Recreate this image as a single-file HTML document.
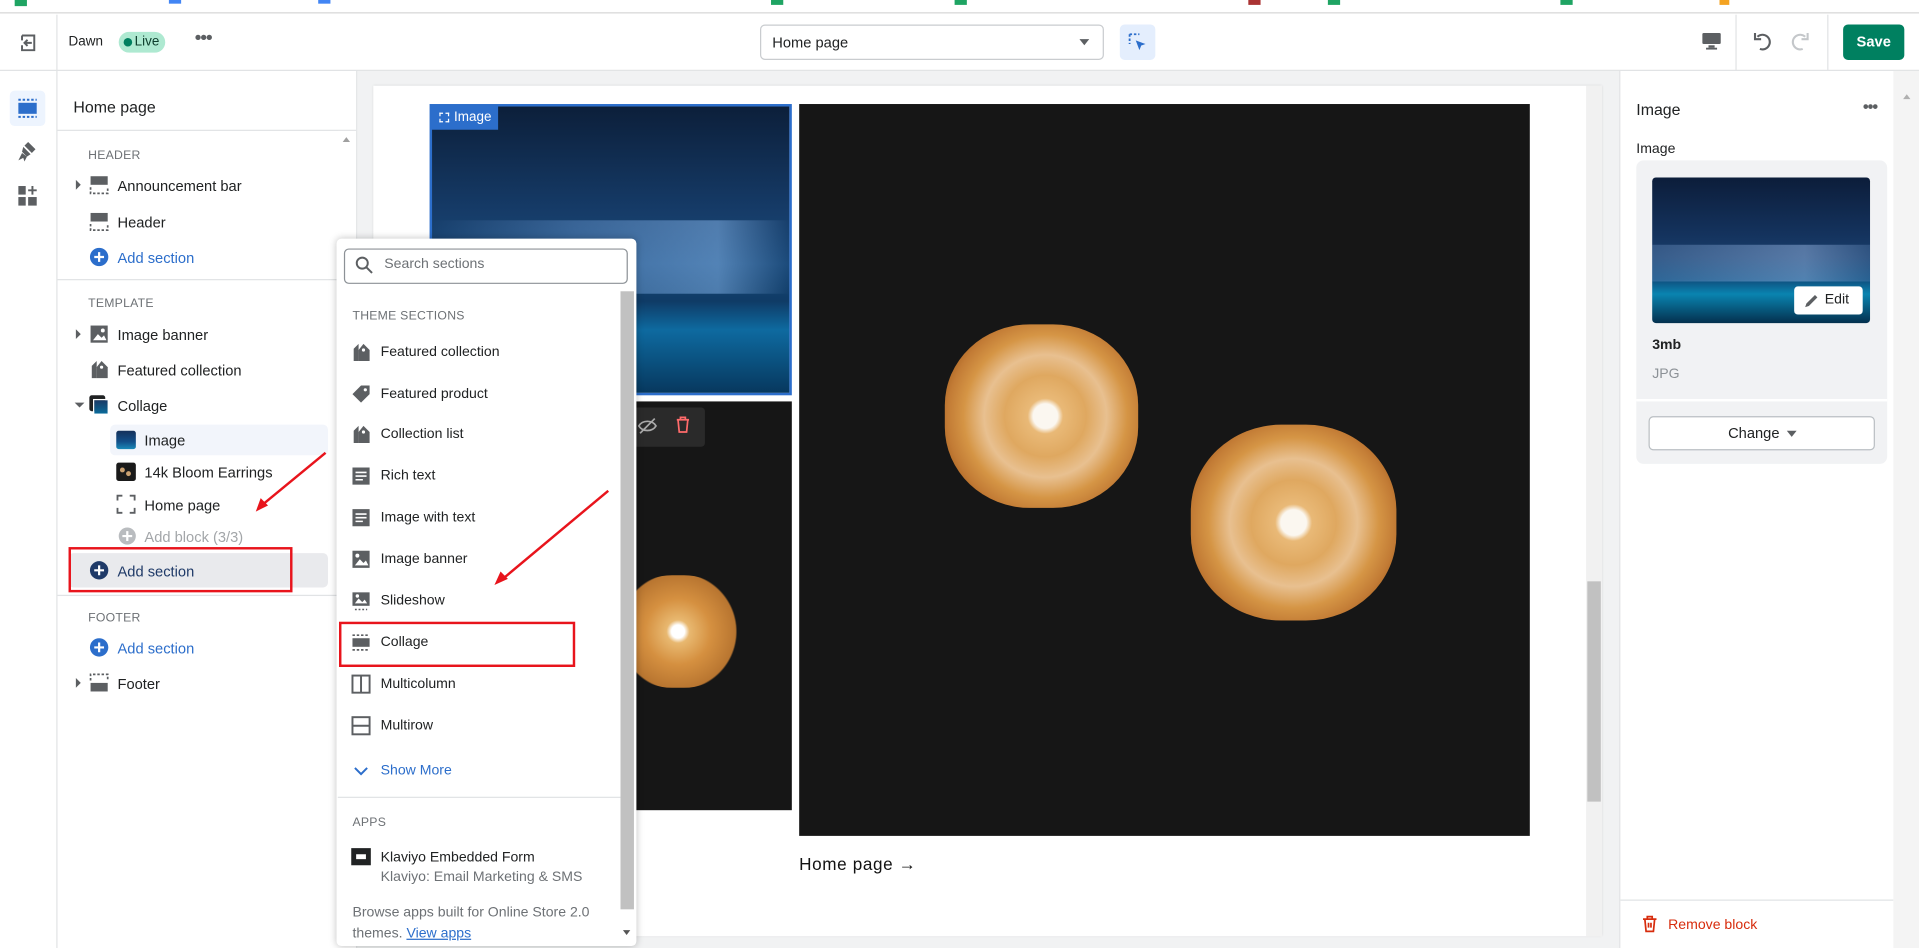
<!DOCTYPE html>
<html><head><meta charset="utf-8"><style>
*{box-sizing:border-box;margin:0;padding:0}
html,body{width:1919px;height:948px;overflow:hidden;background:#fff;font-family:"Liberation Sans",Arial,sans-serif;color:#202223}
#w{position:absolute;left:0;top:0;width:1568px;height:775px;transform:scale(1.22385);transform-origin:0 0;font-size:12px}
.a{position:absolute}
.t{position:absolute;white-space:nowrap}
.lbl{font-size:10px;color:#6d7175;letter-spacing:.2px}
.ic{position:absolute;width:16px;height:16px;background:#5c5f62;border-radius:2px}
.it{position:absolute;white-space:nowrap;font-size:12px;color:#202223}
.pic{position:absolute;width:16px;height:16px}
</style></head><body><div id="w">
<!-- bookmarks strip -->
<div class="a" style="left:0;top:0;width:1568px;height:11px;background:#fff;border-bottom:1px solid #d7d7d7"></div>
<div class="a" style="left:12px;top:0;width:10px;height:5px;background:#1fa463"></div>
<div class="a" style="left:138px;top:0;width:10px;height:3px;background:#4285f4"></div>
<div class="a" style="left:260px;top:0;width:10px;height:3px;background:#4285f4"></div>
<div class="a" style="left:630px;top:0;width:10px;height:4px;background:#1fa463"></div>
<div class="a" style="left:780px;top:0;width:10px;height:4px;background:#1fa463"></div>
<div class="a" style="left:1020px;top:0;width:10px;height:4px;background:#a33"></div>
<div class="a" style="left:1085px;top:0;width:10px;height:4px;background:#1fa463"></div>
<div class="a" style="left:1275px;top:0;width:10px;height:4px;background:#1fa463"></div>
<div class="a" style="left:1405px;top:0;width:8px;height:4px;background:#f4a322"></div>
<!-- toolbar -->
<div class="a" style="left:0;top:12px;width:1568px;height:46px;border-bottom:1px solid #e1e3e5;background:#fff"></div>
<div class="a" style="left:46px;top:12px;width:1px;height:763px;background:#e1e3e5"></div>
<svg class="a" style="left:15px;top:27px" width="16" height="16" viewBox="0 0 16 16"><path d="M3 2h10v12H3V10M3 6V2" fill="none" stroke="#5c5f62" stroke-width="1.6"/><path d="M11 8H5M7.5 5.5 5 8l2.5 2.5" fill="none" stroke="#5c5f62" stroke-width="1.6"/></svg>
<div class="t" style="left:56px;top:28px;font-size:11px">Dawn</div>
<div class="a" style="left:97px;top:26px;width:38px;height:17px;border-radius:9px;background:#aee9d1"></div>
<div class="a" style="left:101px;top:31px;width:7px;height:7px;border-radius:50%;background:#007f5f"></div>
<div class="t" style="left:110px;top:28px;font-size:11px;color:#0d3d2c">Live</div>
<div class="t" style="left:159px;top:23px;font-size:16px;color:#5c5f62;letter-spacing:-1px">•••</div>
<div class="a" style="left:621px;top:20px;width:281px;height:29px;border:1px solid #c9cccf;border-radius:4px"></div>
<div class="t" style="left:631px;top:28px;font-size:12px">Home page</div>
<div class="a" style="left:882px;top:32px;border-left:4px solid transparent;border-right:4px solid transparent;border-top:5px solid #5c5f62"></div>
<div class="a" style="left:915px;top:20px;width:29px;height:29px;background:#e4eefd;border-radius:4px"></div>
<svg class="a" style="left:921px;top:26px" width="17" height="17" viewBox="0 0 17 17"><path d="M2 2h8M2 2v8" fill="none" stroke="#2c6ecb" stroke-width="1.5" stroke-dasharray="2 1.5"/><path d="M7 7l8 3-3.5 1.2L10 15z" fill="#2c6ecb"/></svg>
<svg class="a" style="left:1390px;top:26px" width="17" height="16" viewBox="0 0 17 16"><rect x="1" y="1" width="15" height="9" rx="1" fill="#5c5f62"/><rect x="6" y="11" width="5" height="2" fill="#5c5f62"/><rect x="4" y="13" width="9" height="1.5" fill="#5c5f62"/></svg>
<div class="a" style="left:1418px;top:12px;width:1px;height:46px;background:#e1e3e5"></div>
<svg class="a" style="left:1431px;top:24px" width="20" height="20" viewBox="0 0 20 20"><path d="M5 6a6 6 0 1 1 2 10" fill="none" stroke="#5c5f62" stroke-width="1.7"/><path d="M3 3v5h5" fill="none" stroke="#5c5f62" stroke-width="1.7"/></svg>
<svg class="a" style="left:1460px;top:24px" width="20" height="20" viewBox="0 0 20 20"><path d="M15 6a6 6 0 1 0-2 10" fill="none" stroke="#c4c7ca" stroke-width="1.7"/><path d="M17 3v5h-5" fill="none" stroke="#c4c7ca" stroke-width="1.7"/></svg>
<div class="a" style="left:1493px;top:12px;width:1px;height:46px;background:#e1e3e5"></div>
<div class="a" style="left:1506px;top:20px;width:50px;height:29px;background:#008060;border-radius:4px;color:#fff;font-weight:bold;font-size:12px;text-align:center;line-height:29px">Save</div>
<!-- left rail -->
<div class="a" style="left:8px;top:74px;width:29px;height:29px;background:#edf4fe;border-radius:4px"></div>
<svg class="a" style="left:14px;top:80px" width="17" height="17" viewBox="0 0 17 17"><path d="M1 1.5h15M1 15.5h15" stroke="#2c6ecb" stroke-width="1.6" stroke-dasharray="2 1.5"/><rect x="1" y="4" width="15" height="9" fill="#2c6ecb"/></svg>
<svg class="a" style="left:14px;top:115px" width="18" height="18" viewBox="0 0 18 18"><path d="M9 1l6 6-3 3-6-6zM5 5l6 6-3 2-4-4z" fill="#5c5f62"/><path d="M4 10l-3 6 4-2 1 3 2-4" fill="#5c5f62"/></svg>
<svg class="a" style="left:14px;top:151px" width="18" height="18" viewBox="0 0 18 18"><rect x="1" y="1" width="6" height="7" fill="#5c5f62"/><rect x="1" y="10" width="6" height="7" fill="#5c5f62"/><rect x="9" y="10" width="7" height="7" fill="#5c5f62"/><path d="M12.5 1v7M9 4.5h7" stroke="#5c5f62" stroke-width="1.6"/></svg>
<!-- left panel -->
<div class="t" style="left:60px;top:80px;font-size:13px">Home page</div>
<div class="a" style="left:47px;top:106px;width:244px;height:1px;background:#e1e3e5"></div>
<div class="a" style="left:276px;top:107px;width:15px;height:668px;background:#fff"></div>
<div class="a" style="left:280px;top:112px;border-left:3px solid transparent;border-right:3px solid transparent;border-bottom:4px solid #a0a0a0"></div>
<div class="a" style="left:291px;top:58px;width:1px;height:717px;background:#e1e3e5"></div>
<div class="t lbl" style="left:72px;top:122px">HEADER</div>
<div class="a" style="left:62px;top:147px;border-top:4px solid transparent;border-bottom:4px solid transparent;border-left:4px solid #5c5f62"></div>
<svg class="pic" style="left:73px;top:143px" viewBox="0 0 16 16"><rect x="1" y="1" width="14" height="7" fill="#5c5f62"/><path d="M1 10v5h14v-5" fill="none" stroke="#5c5f62" stroke-width="1.4" stroke-dasharray="2 1.5"/></svg>
<div class="it" style="left:96px;top:145px">Announcement bar</div>
<svg class="pic" style="left:73px;top:173px" viewBox="0 0 16 16"><rect x="1" y="1" width="14" height="7" fill="#5c5f62"/><path d="M1 10v5h14v-5" fill="none" stroke="#5c5f62" stroke-width="1.4" stroke-dasharray="2 1.5"/></svg>
<div class="it" style="left:96px;top:175px">Header</div>
<svg class="pic" style="left:73px;top:202px" viewBox="0 0 16 16"><circle cx="8" cy="8" r="7.5" fill="#2c6ecb"/><path d="M8 4v8M4 8h8" stroke="#fff" stroke-width="1.8"/></svg>
<div class="it" style="left:96px;top:204px;color:#2c6ecb">Add section</div>
<div class="a" style="left:47px;top:228px;width:229px;height:1px;background:#e1e3e5"></div>
<div class="t lbl" style="left:72px;top:243px">TEMPLATE</div>
<div class="a" style="left:62px;top:269px;border-top:4px solid transparent;border-bottom:4px solid transparent;border-left:4px solid #5c5f62"></div>
<svg class="pic" style="left:73px;top:265px" viewBox="0 0 16 16"><rect x="1" y="1" width="14" height="14" fill="#5c5f62"/><path d="M3 13l4-5 3 3 2-2 2 4z" fill="#fff"/><circle cx="11" cy="5" r="1.6" fill="#fff"/></svg>
<div class="it" style="left:96px;top:267px">Image banner</div>
<svg class="pic" style="left:73px;top:294px" viewBox="0 0 16 16"><path d="M6 1l-4 4v10h4z" fill="#5c5f62"/><path d="M10 1l-4 5v9h9V6z" fill="#5c5f62"/><circle cx="10" cy="6" r="1.3" fill="#fff"/></svg>
<div class="it" style="left:96px;top:296px">Featured collection</div>
<div class="a" style="left:61px;top:329px;border-left:4px solid transparent;border-right:4px solid transparent;border-top:4px solid #5c5f62"></div>
<div class="a" style="left:73px;top:323px;width:13px;height:13px;background:#202223;border-radius:2px"></div>
<div class="a" style="left:76px;top:326px;width:13px;height:13px;background:linear-gradient(#1a3a66,#0a6b9a);border:1px solid #fff"></div>
<div class="it" style="left:96px;top:325px">Collage</div>
<div class="a" style="left:90px;top:347px;width:178px;height:25px;background:#f2f5fb;border-radius:4px"></div>
<div class="a" style="left:95px;top:352px;width:16px;height:15px;background:linear-gradient(#14305a,#12508a 60%,#1a8ab8);border-radius:2px"></div>
<div class="it" style="left:118px;top:353px">Image</div>
<div class="a" style="left:95px;top:378px;width:16px;height:15px;background:#1a1a1a;border-radius:2px"></div>
<div class="a" style="left:98px;top:382px;width:4px;height:4px;background:#c9a070;border-radius:50%"></div>
<div class="a" style="left:103px;top:385px;width:4px;height:4px;background:#c9a070;border-radius:50%"></div>
<div class="it" style="left:118px;top:379px">14k Bloom Earrings</div>
<svg class="pic" style="left:95px;top:404px" viewBox="0 0 16 16"><path d="M1 5V1h4M11 1h4v4M15 11v4h-4M5 15H1v-4" fill="none" stroke="#5c5f62" stroke-width="1.5"/></svg>
<div class="it" style="left:118px;top:406px">Home page</div>
<svg class="pic" style="left:96px;top:430px" viewBox="0 0 16 16"><circle cx="8" cy="8" r="7" fill="#b9bcbf"/><path d="M8 4v8M4 8h8" stroke="#fff" stroke-width="1.8"/></svg>
<div class="it" style="left:118px;top:432px;color:#a3a6a9">Add block (3/3)</div>
<div class="a" style="left:56px;top:452px;width:212px;height:28px;background:#e9eaed;border-radius:4px"></div>
<svg class="pic" style="left:73px;top:458px" viewBox="0 0 16 16"><circle cx="8" cy="8" r="7.5" fill="#1f3a68"/><path d="M8 4v8M4 8h8" stroke="#fff" stroke-width="1.8"/></svg>
<div class="it" style="left:96px;top:460px;color:#1f3a68">Add section</div>
<div class="a" style="left:56px;top:447px;width:183px;height:37px;border:2px solid #e8141c"></div>
<div class="a" style="left:47px;top:486px;width:229px;height:1px;background:#e1e3e5"></div>
<div class="t lbl" style="left:72px;top:500px">FOOTER</div>
<svg class="pic" style="left:73px;top:521px" viewBox="0 0 16 16"><circle cx="8" cy="8" r="7.5" fill="#2c6ecb"/><path d="M8 4v8M4 8h8" stroke="#fff" stroke-width="1.8"/></svg>
<div class="it" style="left:96px;top:523px;color:#2c6ecb">Add section</div>
<div class="a" style="left:62px;top:554px;border-top:4px solid transparent;border-bottom:4px solid transparent;border-left:4px solid #5c5f62"></div>
<svg class="pic" style="left:73px;top:550px" viewBox="0 0 16 16"><path d="M1 6V1h14v5" fill="none" stroke="#5c5f62" stroke-width="1.4" stroke-dasharray="2 1.5"/><rect x="1" y="8" width="14" height="7" fill="#5c5f62"/></svg>
<div class="it" style="left:96px;top:552px">Footer</div>
<!-- preview -->
<div class="a" style="left:292px;top:58px;width:1031px;height:717px;background:#f1f2f3"></div>
<div class="a" style="left:305px;top:70px;width:1004px;height:695px;background:#fff;box-shadow:0 0 2px rgba(0,0,0,.15)"></div>
<div class="a" style="left:1296px;top:70px;width:13px;height:695px;background:#f1f1f1"></div>
<div class="a" style="left:1297px;top:475px;width:11px;height:180px;background:#c1c1c1"></div>
<div class="a" style="left:351px;top:85px;width:296px;height:238px;border:2px solid #2c6ecb;background:linear-gradient(180deg,#0c1f3a 0%,#153a66 35%,#1b4a7a 55%,#0f3b66 68%,#0e6aa0 78%,#07385e 100%)"></div>
<div class="a" style="left:353px;top:180px;width:292px;height:60px;background:linear-gradient(90deg,transparent,rgba(120,170,230,.35) 40%,rgba(150,200,255,.45) 80%,transparent)"></div>
<div class="a" style="left:352px;top:86px;width:55px;height:20px;background:#2c6ecb"></div>
<div class="a" style="left:359px;top:92px;width:8px;height:8px;border:1px dashed #fff"></div>
<div class="t" style="left:371px;top:90px;color:#fff;font-size:11px">Image</div>
<div class="a" style="left:351px;top:328px;width:296px;height:334px;background:#161616"></div>
<div class="a" style="left:515px;top:333px;width:61px;height:32px;background:#2a2a2a;border-radius:3px"></div>
<svg class="a" style="left:520px;top:340px" width="18" height="16" viewBox="0 0 18 16"><path d="M2 8c3-5 11-5 14 0-3 5-11 5-14 0z" fill="none" stroke="#aaa" stroke-width="1.4"/><path d="M3 14L15 2" stroke="#aaa" stroke-width="1.4"/></svg>
<svg class="a" style="left:551px;top:340px" width="14" height="14" viewBox="0 0 14 14"><path d="M2 3h10M5 3V1h4v2M3 3l1 10h6l1-10" fill="none" stroke="#ff6b6b" stroke-width="1.4"/></svg>
<div class="a" style="left:505px;top:470px;width:98px;height:92px;border-radius:45%;background:radial-gradient(circle at 50% 50%,#fff 0 8%,#e8b870 14%,#d59040 40%,#b87530 70%,#161616 72%)"></div>
<div class="a" style="left:653px;top:85px;width:597px;height:598px;background:#161616"></div>
<div class="a" style="left:772px;top:265px;width:158px;height:150px;border-radius:44%;background:radial-gradient(circle at 52% 50%,#fbf7f0 0 9%,#e9b977 13%,#dfa860 30%,#e8c090 45%,#d59545 60%,#c27b35 72%,#b06a28 78%,rgba(22,22,22,0) 79%)"></div>
<div class="a" style="left:973px;top:347px;width:168px;height:160px;border-radius:44%;background:radial-gradient(circle at 50% 50%,#fbf7f0 0 9%,#e9b977 13%,#dfa860 30%,#e8c090 45%,#d59545 60%,#c27b35 72%,#b06a28 78%,rgba(22,22,22,0) 79%)"></div>
<div class="t" style="left:653px;top:698px;font-size:14px;letter-spacing:.5px;color:#121212">Home page →</div>
<!-- popup -->
<div class="a" style="left:275px;top:195px;width:245px;height:578px;background:#fff;box-shadow:0 0 6px rgba(0,0,0,.25);border-radius:4px"></div>
<div class="a" style="left:281px;top:203px;width:232px;height:29px;border:1px solid #8c9196;border-radius:4px"></div>
<svg class="a" style="left:290px;top:209px" width="15" height="15" viewBox="0 0 15 15"><circle cx="6" cy="6" r="4.5" fill="none" stroke="#5c5f62" stroke-width="1.6"/><path d="M9.5 9.5L14 14" stroke="#5c5f62" stroke-width="1.6"/></svg>
<div class="t" style="left:314px;top:210px;font-size:11.5px;color:#6d7175">Search sections</div>
<div class="a" style="left:507px;top:238px;width:11px;height:505px;background:#c1c1c1"></div>
<div class="a" style="left:509px;top:760px;border-left:3px solid transparent;border-right:3px solid transparent;border-top:4px solid #555"></div>
<div class="t lbl" style="left:288px;top:253px">THEME SECTIONS</div>
<svg class="pic" style="left:287px;top:280px" viewBox="0 0 16 16"><path d="M6 1l-4 4v10h4z" fill="#5c5f62"/><path d="M10 1l-4 5v9h9V6z" fill="#5c5f62"/><circle cx="10" cy="6" r="1.3" fill="#fff"/></svg>
<div class="it" style="left:311px;top:282px;font-size:11.5px">Featured collection</div>
<svg class="pic" style="left:287px;top:314px" viewBox="0 0 16 16"><path d="M1 8l7-7h7v7l-7 7z" fill="#5c5f62"/><circle cx="11.5" cy="4.5" r="1.3" fill="#fff"/></svg>
<div class="it" style="left:311px;top:316px;font-size:11.5px">Featured product</div>
<svg class="pic" style="left:287px;top:347px" viewBox="0 0 16 16"><path d="M6 1l-4 4v10h4z" fill="#5c5f62"/><path d="M10 1l-4 5v9h9V6z" fill="#5c5f62"/><circle cx="10" cy="6" r="1.3" fill="#fff"/></svg>
<div class="it" style="left:311px;top:349px;font-size:11.5px">Collection list</div>
<svg class="pic" style="left:287px;top:381px" viewBox="0 0 16 16"><rect x="1" y="1" width="14" height="14" fill="#5c5f62"/><path d="M3.5 5h9M3.5 8h9M3.5 11h6" stroke="#fff" stroke-width="1.3"/></svg>
<div class="it" style="left:311px;top:383px;font-size:11.5px">Rich text</div>
<svg class="pic" style="left:287px;top:415px" viewBox="0 0 16 16"><rect x="1" y="1" width="14" height="14" fill="#5c5f62"/><path d="M3.5 5h9M3.5 8h9M3.5 11h6" stroke="#fff" stroke-width="1.3"/></svg>
<div class="it" style="left:311px;top:417px;font-size:11.5px">Image with text</div>
<svg class="pic" style="left:287px;top:449px" viewBox="0 0 16 16"><rect x="1" y="1" width="14" height="14" fill="#5c5f62"/><path d="M3 13l4-5 3 3 2-2 2 4z" fill="#fff"/><circle cx="5" cy="5" r="1.6" fill="#fff"/></svg>
<div class="it" style="left:311px;top:451px;font-size:11.5px">Image banner</div>
<svg class="pic" style="left:287px;top:483px" viewBox="0 0 16 16"><rect x="1" y="1" width="14" height="11" fill="#5c5f62"/><path d="M3 10l3-4 3 3 2-2 2 3z" fill="#fff"/><circle cx="5" cy="4" r="1.4" fill="#fff"/><path d="M3 15h10" stroke="#5c5f62" stroke-width="1.2" stroke-dasharray="1.5 1.5"/></svg>
<div class="it" style="left:311px;top:485px;font-size:11.5px">Slideshow</div>
<svg class="pic" style="left:287px;top:517px" viewBox="0 0 16 16"><path d="M1 2h14M1 14h14" stroke="#5c5f62" stroke-width="1.4" stroke-dasharray="2 1.5"/><rect x="1" y="4.5" width="14" height="7" fill="#5c5f62"/></svg>
<div class="it" style="left:311px;top:519px;font-size:11.5px">Collage</div>
<div class="a" style="left:277px;top:508px;width:193px;height:37px;border:2px solid #e8141c"></div>
<svg class="pic" style="left:287px;top:551px" viewBox="0 0 16 16"><rect x="1" y="1" width="14" height="14" fill="none" stroke="#5c5f62" stroke-width="1.6"/><path d="M8 1v14" stroke="#5c5f62" stroke-width="1.6"/></svg>
<div class="it" style="left:311px;top:553px;font-size:11.5px">Multicolumn</div>
<svg class="pic" style="left:287px;top:585px" viewBox="0 0 16 16"><rect x="1" y="1" width="14" height="14" fill="none" stroke="#5c5f62" stroke-width="1.6"/><path d="M1 8h14" stroke="#5c5f62" stroke-width="1.6"/></svg>
<div class="it" style="left:311px;top:587px;font-size:11.5px">Multirow</div>
<svg class="a" style="left:289px;top:626px" width="12" height="8" viewBox="0 0 12 8"><path d="M1 1.5l5 5 5-5" fill="none" stroke="#2c6ecb" stroke-width="1.6"/></svg>
<div class="it" style="left:311px;top:624px;font-size:11.5px;color:#2c6ecb">Show More</div>
<div class="a" style="left:276px;top:651px;width:231px;height:1px;background:#e1e3e5"></div>
<div class="t lbl" style="left:288px;top:667px">APPS</div>
<div class="a" style="left:287px;top:693px;width:16px;height:14px;background:#202223"></div>
<div class="a" style="left:291px;top:698px;width:8px;height:4px;background:#fff"></div>
<div class="it" style="left:311px;top:695px;font-size:11.5px">Klaviyo Embedded Form</div>
<div class="it" style="left:311px;top:711px;font-size:11.5px;color:#6d7175">Klaviyo: Email Marketing &amp; SMS</div>
<div class="it" style="left:288px;top:740px;font-size:11.5px;color:#6d7175">Browse apps built for Online Store 2.0</div>
<div class="it" style="left:288px;top:757px;font-size:11.5px;color:#6d7175">themes. <span style="color:#2c6ecb;text-decoration:underline">View apps</span></div>
<!-- red arrows -->
<svg class="a" style="left:0;top:0" width="600" height="600" viewBox="0 0 600 600"><path d="M266 370L215 412" stroke="#e8141c" stroke-width="2"/><path d="M209 418l4-11 6 6z" fill="#e8141c"/><path d="M497 401L412 472" stroke="#e8141c" stroke-width="2"/><path d="M404 478l5-11 6 6z" fill="#e8141c"/></svg>
<!-- right panel -->
<div class="a" style="left:1323px;top:58px;width:1px;height:717px;background:#e1e3e5"></div>
<div class="a" style="left:1547px;top:58px;width:21px;height:717px;background:#f4f4f4"></div>
<div class="a" style="left:1555px;top:77px;border-left:3px solid transparent;border-right:3px solid transparent;border-bottom:4px solid #b0b0b0"></div>
<div class="t" style="left:1337px;top:82px;font-size:13px">Image</div>
<div class="t" style="left:1522px;top:79px;font-size:14px;color:#5c5f62;letter-spacing:-1px">•••</div>
<div class="t" style="left:1337px;top:116px;font-size:11.5px">Image</div>
<div class="a" style="left:1337px;top:131px;width:205px;height:248px;background:#f1f2f4;border-radius:6px"></div>
<div class="a" style="left:1350px;top:145px;width:178px;height:119px;border-radius:3px;background:linear-gradient(180deg,#0c1d3a 0%,#14335e 40%,#1a3f6c 55%,#0f4c7c 70%,#0a84b0 80%,#04304e 100%)"></div>
<div class="a" style="left:1350px;top:200px;width:178px;height:30px;background:linear-gradient(90deg,rgba(140,180,230,.25),rgba(180,210,255,.4) 70%,rgba(140,180,230,.2))"></div>
<div class="a" style="left:1466px;top:234px;width:56px;height:23px;background:#fff;border-radius:3px"></div>
<svg class="a" style="left:1474px;top:239px" width="13" height="13" viewBox="0 0 13 13"><path d="M1 12l1-3 7-7 2 2-7 7z" fill="#5c5f62"/></svg>
<div class="t" style="left:1491px;top:239px;font-size:11.5px">Edit</div>
<div class="t" style="left:1350px;top:276px;font-size:11.5px;font-weight:bold">3mb</div>
<div class="t" style="left:1350px;top:300px;font-size:11.5px;color:#8c9196">JPG</div>
<div class="a" style="left:1337px;top:326px;width:205px;height:2px;background:#fff"></div>
<div class="a" style="left:1347px;top:340px;width:185px;height:28px;background:#fff;border:1px solid #babfc3;border-radius:4px"></div>
<div class="t" style="left:1412px;top:347px;font-size:12px">Change</div>
<div class="a" style="left:1460px;top:352px;border-left:4px solid transparent;border-right:4px solid transparent;border-top:5px solid #5c5f62"></div>
<div class="a" style="left:1324px;top:735px;width:223px;height:1px;background:#e1e3e5"></div>
<svg class="a" style="left:1341px;top:748px" width="14" height="14" viewBox="0 0 14 14"><path d="M1.5 3h11M5 3V1h4v2M3 3l1 10h6l1-10M6 6v4M8 6v4" fill="none" stroke="#d72c0d" stroke-width="1.4"/></svg>
<div class="t" style="left:1363px;top:750px;font-size:11.5px;color:#d72c0d">Remove block</div>
</div></body></html>
